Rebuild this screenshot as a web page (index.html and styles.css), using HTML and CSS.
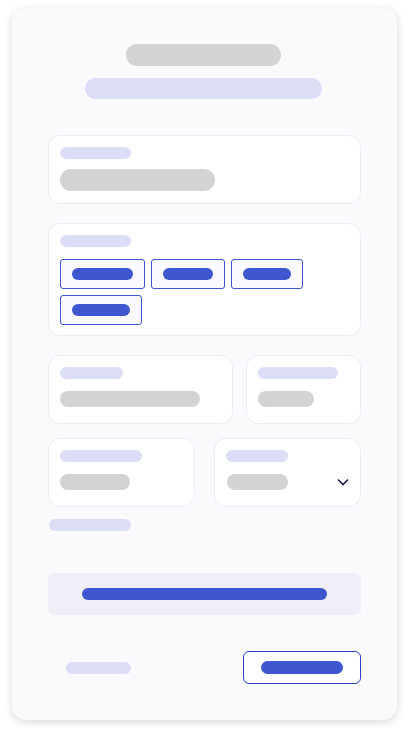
FILE: index.html
```
<!DOCTYPE html>
<html lang="en">
  <head>
    <meta charset="UTF-8" />
    <meta name="viewport" content="width=device-width, initial-scale=1.0" />
    <title>Form Skeleton</title>
    <link rel="stylesheet" href="styles.css">
  </head>
  <body>
    <div class="sheet">
      <div class="head">
        <div class="bar gray title"></div>
        <div class="bar lilac subtitle"></div>
      </div>

      <div class="field field-wide">
        <div class="bar lilac label" style="width: 71px"></div>
        <div class="bar gray value-lg" style="width: 155px"></div>
      </div>

      <div class="field field-chips">
        <div class="bar lilac label" style="width: 71px"></div>
        <div class="chips">
          <div class="chip"><div class="bar blue" style="width: 61px"></div></div>
          <div class="chip"><div class="bar blue" style="width: 50px"></div></div>
          <div class="chip"><div class="bar blue" style="width: 48px"></div></div>
          <div class="chip"><div class="bar blue" style="width: 58px"></div></div>
        </div>
      </div>

      <div class="row row-a">
        <div class="field">
          <div class="bar lilac label" style="width: 63px"></div>
          <div class="bar gray value" style="width: 140px"></div>
        </div>
        <div class="field">
          <div class="bar lilac label" style="width: 80px"></div>
          <div class="bar gray value" style="width: 56px"></div>
        </div>
      </div>

      <div class="row row-b">
        <div class="field">
          <div class="bar lilac label" style="width: 82px"></div>
          <div class="bar gray value" style="width: 70px"></div>
        </div>
        <div class="field">
          <div class="bar lilac label" style="width: 62px"></div>
          <div class="select">
            <div class="bar gray value" style="width: 61px"></div>
            <svg class="chevron" width="12" height="8" viewBox="0 0 12 8">
              <polyline points="1,1.5 6,6.5 11,1.5" fill="none" stroke="#1b1f4a" stroke-width="1.6" />
            </svg>
          </div>
        </div>
      </div>

      <div class="bar lilac hint"></div>

      <div class="notice">
        <div class="bar blue notice-bar"></div>
      </div>

      <div class="actions">
        <div class="bar lilac cancel"></div>
        <div class="btn">
          <div class="bar blue btn-bar"></div>
        </div>
      </div>
    </div>
  </body>
</html>
```

FILE: styles.css
```
* {
  margin: 0;
  padding: 0;
  box-sizing: border-box;
}

body {
  font-family: "Inter", "Liberation Sans", sans-serif;
  background-color: #ffffff;
  padding: 8px 12px;
}

/* Outer card */
.sheet {
  width: 385px;
  height: 712px;
  background-color: #fafafd;
  border-radius: 14px;
  box-shadow: 0 2px 9px rgba(0, 0, 0, 0.16);
  padding: 36px 36px;
  display: flex;
  flex-direction: column;
}

/* Skeleton bars */
.bar {
  border-radius: 999px;
  height: 12px;
  flex-shrink: 0;
}

.gray {
  background-color: #d3d3d3;
}

.lilac {
  background-color: #dcdef8;
}

.blue {
  background-color: #3e56d0;
}

.head {
  display: flex;
  flex-direction: column;
  align-items: center;
  gap: 12px;
  margin-bottom: 36px;
  padding-right: 2px;
}

.title {
  width: 155px;
  height: 22px;
}

.subtitle {
  width: 237px;
  height: 21px;
}

/* Fields */
.field {
  background-color: #ffffff;
  border: 1px solid #ececf5;
  border-radius: 12px;
  padding: 11px;
  min-height: 69px;
}

.label {
  margin-bottom: 12px;
}

.field-wide .label {
  margin-bottom: 10px;
}

.value-lg {
  height: 22px;
}

.value {
  height: 16px;
}

.field-wide {
  margin-bottom: 19px;
}

.field-chips {
  padding-bottom: 10px;
  margin-bottom: 19px;
}

.chips {
  display: flex;
  flex-wrap: wrap;
  gap: 6px;
}

.chip {
  border: 1px solid #3e56d0;
  border-radius: 3px;
  background-color: #f9f9fd;
  padding: 8px 11px;
}

.row {
  display: grid;
}

.row-a {
  grid-template-columns: 185px 1fr;
  column-gap: 13px;
  margin-bottom: 14px;
}

.row-b {
  grid-template-columns: 1fr 1fr;
  column-gap: 19px;
  margin-bottom: 12px;
}

.select {
  display: flex;
  align-items: center;
  justify-content: space-between;
  padding-left: 1px;
}

.chevron {
  display: block;
}

.hint {
  width: 82px;
  margin-left: 1px;
  margin-bottom: 42px;
}

/* Notice */
.notice {
  background-color: #efeff8;
  border-radius: 6px;
  height: 42px;
  display: flex;
  align-items: center;
  justify-content: center;
  margin-bottom: 36px;
}

.notice-bar {
  width: 245px;
}

/* Footer actions */
.actions {
  display: flex;
  justify-content: space-between;
  align-items: center;
}

.cancel {
  width: 65px;
  margin-left: 18px;
}

.btn {
  width: 118px;
  height: 33px;
  border: 1px solid #2b3fc6;
  border-radius: 6px;
  background-color: #ffffff;
  display: flex;
  align-items: center;
  justify-content: center;
}

.btn-bar {
  width: 82px;
  height: 13px;
}
```
